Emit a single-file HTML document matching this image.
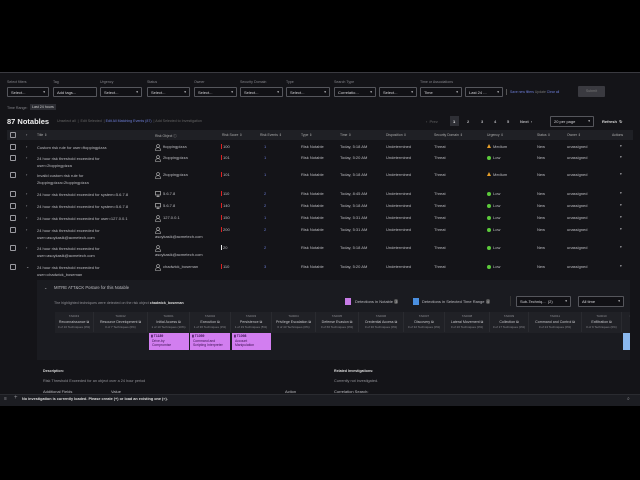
<!DOCTYPE html>
<html><head><meta charset="utf-8"><style>
*{margin:0;padding:0;box-sizing:border-box}
body{width:640px;height:480px;background:#000;position:relative;overflow:hidden;font-family:"Liberation Sans",sans-serif;color:#b8b8bc;font-size:4px}
.a{position:absolute;white-space:nowrap}
#main{position:absolute;left:0;top:72px;width:640px;height:334px;background:#141418;border-top:1px solid #3a3a40}
.lbl{color:#85858b;font-size:3.6px}
.sel{position:absolute;height:10px;border:1px solid #55565c;border-radius:1px;background:#111115;font-size:4px;color:#d4d4d8;padding:2px 3px;line-height:5px}
.sel .c{position:absolute;right:3px;top:2px;font-size:3.5px}
.cb{position:absolute;width:6px;height:6px;border:1px solid #9a9aa0;border-radius:1px}
.t{color:#bdbdc2}
.dim{color:#939399}
.bar{position:absolute;width:1px;height:5px;background:#d23;}
.dot{display:inline-block;width:4px;height:4px;border-radius:50%;background:#5ccb3b;margin-right:2px;vertical-align:-0.5px}
.tri{display:inline-block;width:0;height:0;border-left:2.2px solid transparent;border-right:2.2px solid transparent;border-bottom:4px solid #e8a02a;margin-right:2px}
.tac{position:absolute;top:312px;height:20px;border-right:1px solid #2a2b30;text-align:center;font-size:3px;color:#8a8a90;line-height:5.5px;padding-top:2px;overflow:hidden}
.tac b{display:block;font-weight:normal;color:#c4c4c8;font-size:3.6px}
.tech{position:absolute;top:333px;height:17px;background:#d27ef0;color:#3a1050;font-size:3.4px;line-height:4.5px;padding:1px 2px}
</style></head><body>
<div id="main"></div>
<div class="a lbl" style="left:7px;top:80px">Select filters</div>
<div class="a lbl" style="left:53px;top:80px">Tag</div>
<div class="a lbl" style="left:100px;top:80px">Urgency</div>
<div class="a lbl" style="left:147px;top:80px">Status</div>
<div class="a lbl" style="left:194px;top:80px">Owner</div>
<div class="a lbl" style="left:240px;top:80px">Security Domain</div>
<div class="a lbl" style="left:286px;top:80px">Type</div>
<div class="a lbl" style="left:334px;top:80px">Search Type</div>
<div class="a lbl" style="left:420px;top:80px">Time or Associations</div>
<div class="sel" style="left:7px;top:87px;width:42px">Select...<span class="c">▾</span></div>
<div class="sel" style="left:53px;top:87px;width:44px">Add tags...</div>
<div class="sel" style="left:100px;top:87px;width:42px">Select...<span class="c">▾</span></div>
<div class="sel" style="left:147px;top:87px;width:43px">Select...<span class="c">▾</span></div>
<div class="sel" style="left:194px;top:87px;width:43px">Select...<span class="c">▾</span></div>
<div class="sel" style="left:240px;top:87px;width:43px">Select...<span class="c">▾</span></div>
<div class="sel" style="left:286px;top:87px;width:44px">Select...<span class="c">▾</span></div>
<div class="sel" style="left:334px;top:87px;width:42px">Correlatio...<span class="c">▾</span></div>
<div class="sel" style="left:379px;top:87px;width:38px">Select...<span class="c">▾</span></div>
<div class="sel" style="left:420px;top:87px;width:42px">Time<span class="c">▾</span></div>
<div class="sel" style="left:465px;top:87px;width:38px">Last 24 ...<span class="c">▾</span></div>
<div class="a" style="left:506px;top:89px;width:1px;height:6px;background:#555"></div>
<div class="a" style="left:510px;top:90px;font-size:3.4px;color:#6d7ed8">Save new filters <span style="color:#777">Update</span> <span style="color:#6d7ed8">Clear all</span></div>
<div class="a" style="left:578px;top:86px;width:27px;height:11px;background:#3a3a40;border-radius:1px;color:#777;font-size:3.6px;text-align:center;line-height:11px">Submit</div>
<div class="a lbl" style="left:7px;top:106px">Time Range:</div>
<div class="a" style="left:30px;top:104px;padding:1px 2px;background:#2c2d33;font-size:3.6px;color:#ccc">Last 24 hours</div>
<div class="a" style="left:7px;top:117px;font-size:7.5px;font-weight:bold;color:#eee">87 Notables</div>
<div class="a" style="left:57px;top:119px;font-size:3.6px;color:#666">Unselect all &nbsp;|&nbsp; Edit Selected &nbsp;| <span style="color:#6d7ed8">Edit All Matching Events (87)</span> &nbsp;| Add Selected to Investigation</div>
<div class="a" style="left:426px;top:119px;font-size:4px;color:#666">‹ &nbsp;Prev</div>
<div class="a" style="left:450px;top:116px;width:9px;height:10px;background:#2e2f35"></div>
<div class="a" style="left:453px;top:119px;font-size:4px;color:#eee;font-weight:bold">1</div>
<div class="a" style="left:467px;top:119px;font-size:4px;font-weight:bold">2</div>
<div class="a" style="left:481px;top:119px;font-size:4px;font-weight:bold">3</div>
<div class="a" style="left:494px;top:119px;font-size:4px;font-weight:bold">4</div>
<div class="a" style="left:507px;top:119px;font-size:4px;font-weight:bold">5</div>
<div class="a" style="left:520px;top:119px;font-size:4px;font-weight:bold">Next &nbsp;›</div>
<div class="sel" style="left:550px;top:116px;width:44px;height:11px">20 per page<span class="c">▾</span></div>
<div class="a" style="left:602px;top:119px;font-size:4px;font-weight:bold;color:#ddd">Refresh &nbsp;↻</div>
<div class="a" style="left:7px;top:130px;width:626px;height:10px;background:#1f2025"></div>
<div class="cb" style="left:10px;top:132px"></div>
<div class="a t" style="left:26px;top:132px">›</div>
<div class="a" style="left:0;top:133px;font-size:3.4px;color:#aaa;width:640px">
<span class="a" style="left:37px">Title ⇕</span><span class="a" style="left:155px">Risk Object ⓘ</span><span class="a" style="left:222px">Risk Score ⇕</span><span class="a" style="left:260px">Risk Events ⇕</span><span class="a" style="left:301px">Type ⇕</span><span class="a" style="left:340px">Time ⇕</span><span class="a" style="left:386px">Disposition ⇕</span><span class="a" style="left:434px">Security Domain ⇕</span><span class="a" style="left:487px">Urgency ⇕</span><span class="a" style="left:537px">Status ⇕</span><span class="a" style="left:567px">Owner ⇕</span><span class="a" style="left:612px">Actions</span></div>
<div id="rows"></div>
<script>
const R=[
[144,["Custom risk rule for user=ftoppingpizza"],"u",["ftoppingpizza"],"100",1,"Today, 5:18 AM","m"],
[155,["24 hour risk threshold exceeded for","user=2toppingpizza"],"u",["2toppingpizza"],"101",1,"Today, 5:20 AM","l"],
[172,["Invalid custom risk rule for","2toppingpizza=2toppingpizza"],"u",["2toppingpizza"],"101",1,"Today, 5:18 AM","m"],
[191,["24 hour risk threshold exceeded for system=5.6.7.8"],"s",["5.6.7.8"],"110",2,"Today, 8:45 AM","l"],
[203,["24 hour risk threshold exceeded for system=5.6.7.8"],"s",["5.6.7.8"],"140",2,"Today, 5:18 AM","l"],
[215,["24 hour risk threshold exceeded for user=127.0.0.1"],"u",["127.0.0.1"],"150",1,"Today, 5:31 AM","l"],
[227,["24 hour risk threshold exceeded for","user=asoykasik@acmetech.com"],"u2",["asoykasik@acmetech.com"],"200",2,"Today, 5:31 AM","l"],
[245,["24 hour risk threshold exceeded for","user=asoykasik@acmetech.com"],"u2",["asoykasik@acmetech.com"],"20",2,"Today, 5:18 AM","l"],
[264,["24 hour risk threshold exceeded for","user=chadwick_boseman"],"u",["chadwick_boseman"],"110",3,"Today, 5:20 AM","l"]];
let h="";
R.forEach((r,i)=>{const y=r[0];
h+=`<div class="cb" style="left:10px;top:${y}px"></div><div class="a t" style="left:26px;top:${y-0.5}px">${i==8?'⌄':'›'}</div>`;
h+=`<div class="a t" style="left:37px;top:${y}px;line-height:7px">${r[1].join('<br>')}</div>`;
const ic=r[2]=="s"?`<svg class="a" style="left:155px;top:${y}px" width="6" height="6"><rect x="0.5" y="0.5" width="5" height="3.5" fill="none" stroke="#bbb" stroke-width="0.7"/><path d="M3 4v1.5M1.5 5.5h3" stroke="#bbb" stroke-width="0.7"/></svg>`:`<svg class="a" style="left:155px;top:${y-0.5}px" width="6" height="7"><circle cx="3" cy="2" r="1.4" fill="none" stroke="#bbb" stroke-width="0.6"/><path d="M0.5 6.5c0-2 1-3 2.5-3s2.5 1 2.5 3z" fill="none" stroke="#bbb" stroke-width="0.6"/></svg>`;
h+=ic;
h+= r[2]=="u2"?`<div class="a t" style="left:155px;top:${y+7}px">${r[3][0]}</div>`:`<div class="a t" style="left:163px;top:${y}px">${r[3][0]}</div>`;
h+=`<div class="bar" style="left:221px;top:${y}px;background:${r[4]=="20"?"#eee":"#d22"}"></div><div class="a t" style="left:223px;top:${y}px">${r[4]}</div>`;
h+=`<div class="a" style="left:264px;top:${y}px;color:#6d7ed8">${r[5]}</div>`;
h+=`<div class="a t" style="left:301px;top:${y}px">Risk Notable</div><div class="a t" style="left:340px;top:${y}px">${r[6]}</div><div class="a t" style="left:386px;top:${y}px">Undetermined</div><div class="a t" style="left:434px;top:${y}px">Threat</div>`;
h+=`<div class="a t" style="left:487px;top:${y}px">${r[7]=="m"?'<span class="tri"></span>Medium':'<span class="dot"></span>Low'}</div>`;
h+=`<div class="a t" style="left:537px;top:${y}px">New</div><div class="a t" style="left:567px;top:${y}px">unassigned</div><div class="a t" style="left:620px;top:${y}px;font-size:3.5px">▾</div>`;
});
document.getElementById('rows').innerHTML=h;
</script>
<div class="a" style="left:37px;top:280px;width:593px;height:80px;background:#1a1b20"></div>
<div class="a t" style="left:44px;top:285px">⌄</div>
<div class="a t" style="left:54px;top:285px;font-size:4.2px">MITRE ATT&amp;CK Posture for this Notable</div>
<div class="a dim" style="left:54px;top:301px;font-size:3.6px">The highlighted techniques were detected on the risk object <b style="color:#ddd">chadwick_boseman</b></div>
<div class="a" style="left:345px;top:298px;width:6px;height:7px;background:#c77be6"></div>
<div class="a t" style="left:355px;top:299px;font-size:4px">Detections in Notable <span style="background:#555;border-radius:3px;padding:0 1px">3</span></div>
<div class="a" style="left:413px;top:298px;width:6px;height:7px;background:#4a8fe0"></div>
<div class="a t" style="left:422px;top:299px;font-size:4px">Detections in Selected Time Range <span style="background:#555;border-radius:3px;padding:0 1px">4</span></div>
<div class="a" style="left:510px;top:296px;width:1px;height:10px;background:#333"></div>
<div class="sel" style="left:516px;top:296px;width:55px;height:11px">Sub-Techniq... &nbsp;(2)<span class="c">▾</span></div>
<div class="sel" style="left:578px;top:296px;width:46px;height:11px">All time<span class="c">▾</span></div>
<div class="a" style="left:55px;top:312px;width:575px;height:21px;background:#202126"></div>
<div id="tacs"></div>
<script>
const T=[[55,39,"TA0043","Reconnaissance","0 of 10 Techniques (0%)"],[94,54,"TA0042","Resource Development","0 of 7 Techniques (0%)"],[148,42,"TA0001","Initial Access","1 of 10 Techniques (10%)"],[190,41,"TA0002","Execution","1 of 36 Techniques (3%)"],[231,41,"TA0003","Persistence","1 of 19 Techniques (5%)"],[272,44,"TA0004","Privilege Escalation","0 of 43 Techniques (0%)"],[316,43,"TA0005","Defense Evasion","0 of 66 Techniques (0%)"],[359,45,"TA0006","Credential Access","0 of 30 Techniques (0%)"],[404,41,"TA0007","Discovery","0 of 32 Techniques (0%)"],[445,45,"TA0008","Lateral Movement","0 of 20 Techniques (0%)"],[490,39,"TA0009","Collection","0 of 17 Techniques (0%)"],[529,53,"TA0011","Command and Control","0 of 24 Techniques (0%)"],[582,40,"TA0010","Exfiltration","0 of 9 Techniques (0%)"],[622,20,"","","1 o"]];
let g="";T.forEach(t=>{g+=`<div class="tac" style="left:${t[0]}px;width:${t[1]}px">${t[2]}<b>${t[3]} ${t[3]?'⧉':''}</b>${t[4]}</div>`});
document.getElementById('tacs').innerHTML=g;
</script>
<div class="a" style="left:630px;top:312px;width:10px;height:21px;background:#141418"></div>
<div class="tech" style="left:149px;width:40px"><b>▮ T1189</b><br>&nbsp;Drive-by<br>&nbsp;Compromise</div>
<div class="tech" style="left:190px;width:40px"><b>▮ T1059</b><br>&nbsp;Command and<br>&nbsp;Scripting Interpreter</div>
<div class="tech" style="left:232px;width:39px"><b>▮ T1098</b><br>&nbsp;Account<br>&nbsp;Manipulation</div>
<div class="a" style="left:623px;top:333px;width:7px;height:17px;background:#8ab8ee"></div>
<div class="a" style="left:43px;top:369px;font-size:3.6px;font-weight:bold;color:#ddd">Description:</div>
<div class="a dim" style="left:43px;top:379px;font-size:3.8px">Risk Threshold Exceeded for an object over a 24 hour period</div>
<div class="a t" style="left:43px;top:389px;font-size:4px">Additional Fields</div>
<div class="a t" style="left:111px;top:389px;font-size:4px">Value</div>
<div class="a t" style="left:285px;top:389px;font-size:4px">Action</div>
<div class="a" style="left:334px;top:369px;font-size:3.6px;font-weight:bold;color:#ddd">Related Investigations:</div>
<div class="a dim" style="left:334px;top:379px;font-size:3.8px">Currently not investigated.</div>
<div class="a t" style="left:334px;top:389px;font-size:4px">Correlation Search:</div>
<div class="a" style="left:0;top:394px;width:640px;height:12px;background:#1c1d22;border-top:1px solid #2a2b30"></div>
<div class="a dim" style="left:4px;top:396px;font-size:5px">≡</div>
<div class="a dim" style="left:14px;top:395px;font-size:6px">+</div>
<div class="a" style="left:22px;top:397px;font-size:3.8px;color:#ddd;font-weight:bold">No investigation is currently loaded. Please create (+) or load an existing one (≡).</div>
<div class="a dim" style="left:627px;top:396px;font-size:5px">⌕</div>
</body></html>
